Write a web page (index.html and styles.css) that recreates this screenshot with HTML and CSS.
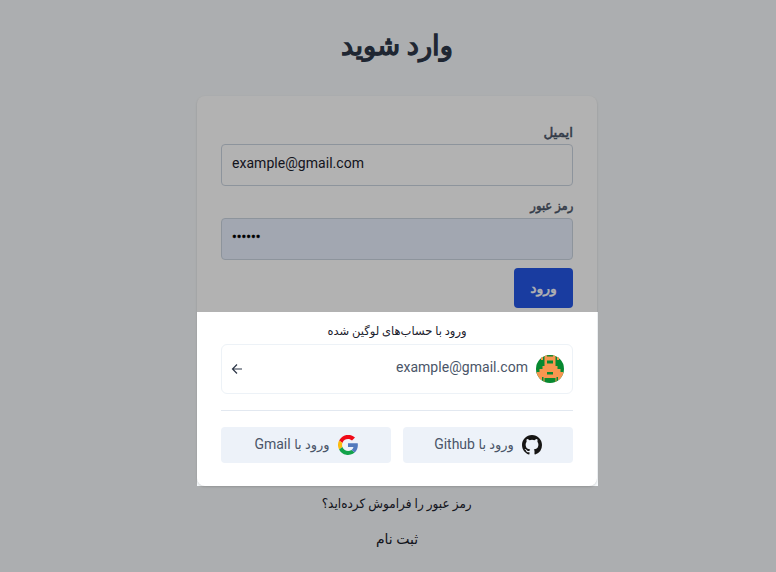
FILE: index.html
```html
<!DOCTYPE html>
<html lang="fa" dir="rtl">
<head>
<meta charset="utf-8">
<title>وارد شوید</title>
<link rel="stylesheet" href="styles.css">
</head>
<body>
<main class="page">
  <h1 class="title">وارد شوید</h1>
  <div class="card">
    <form class="form">
      <label class="label" for="email">ایمیل</label>
      <input class="input" id="email" type="text" dir="ltr" value="example@gmail.com">
      <label class="label label-next" for="password">رمز عبور</label>
      <div class="input input-filled" id="password" dir="ltr"><span class="dots">••••••</span></div>
      <button class="submit" type="button"><span>ورود</span></button>
    </form>
    <section class="spotlight">
      <div class="accounts-title">ورود با حساب‌های لوگین شده</div>
      <div class="account">
        <svg class="avatar" viewBox="0 0 28 28">
          <defs><clipPath id="round"><circle cx="14" cy="14" r="14"/></clipPath></defs>
          <g clip-path="url(#round)">
            <path fill="#078930" d="M0 0h28v28H0z"/>
            <path fill="#f79650" d="M8.500 0h11v11h2v3h3v3h3v5h-7v6h-1v-5h-11v5h-1v-6h-7v-5h3v-3h3v-3h2z"/>
            <path fill="#f79650" d="M5 2h2v3H5zM21 2h2v3h-2zM3 22h3v3H3zM22 22h3v3h-3z"/>
            <path fill="#078930" d="M11 0h6v1.500h-6zM11 5.500h6v3h-6zM11 17h6v2.500h-6z"/>
          </g>
        </svg>
        <span class="account-email">example@gmail.com</span>
        <svg class="arrow" viewBox="0 0 12 12"><path d="M11 6H1.500M6 1.500L1.500 6 6 10.500" fill="none" stroke="#2d3748" stroke-width="1.200"/></svg>
      </div>
      <div class="providers">
        <button class="provider" type="button">
          <svg class="logo" viewBox="0 0 16 16"><path fill="#161514" d="M8 0C3.580 0 0 3.580 0 8c0 3.540 2.290 6.530 5.470 7.590.4.070.55-.17.55-.38 0-.19-.01-.82-.01-1.490-2.010.37-2.530-.49-2.690-.94-.09-.23-.48-.94-.82-1.130-.28-.15-.68-.52-.01-.53.63-.01 1.080.58 1.230.82.72 1.210 1.870.87 2.330.66.07-.52.28-.87.51-1.070-1.780-.2-3.640-.89-3.640-3.950 0-.87.31-1.590.82-2.150-.08-.2-.36-1.020.08-2.120 0 0 .67-.21 2.200.82a7.600 7.600 0 0 1 4 0c1.530-1.040 2.200-.82 2.200-.82.44 1.100.16 1.920.08 2.120.51.56.82 1.270.82 2.150 0 3.070-1.870 3.750-3.650 3.950.29.25.54.73.54 1.480 0 1.070-.01 1.930-.01 2.200 0 .21.15.46.55.38A8.010 8.010 0 0 0 16 8c0-4.420-3.580-8-8-8z"/></svg>
          <span class="provider-text"><span class="fa">ورود با</span> Github</span>
        </button>
        <button class="provider" type="button">
          <svg class="logo" viewBox="0 0 20 20">
            <path fill="#f00a18" d="M10 4c1.600 0 3 .6 4 1.500L17 2.600A10 10 0 0 0 1.100 5.500l3.300 2.600A6 6 0 0 1 10 4z"/>
            <path fill="#fbbb10" d="M4.400 8.100L1.100 5.500a10 10 0 0 0 0 9l3.300-2.600a6 6 0 0 1 0-3.800z"/>
            <path fill="#12a34a" d="M4.400 11.900l-3.300 2.600a10 10 0 0 0 15.600 2.900l-3.200-2.500c-2.800 2-7.500 1.300-9.100-3z"/>
            <path fill="#537abd" d="M10 8.200V12h5.500c-.3 1.200-1 2.200-2 2.900l3.200 2.500c2.500-2.200 3.600-5.500 3-9.200z"/>
          </svg>
          <span class="provider-text"><span class="fa">ورود با</span> Gmail</span>
        </button>
      </div>
    </section>
  </div>
  <a class="link link-forgot">رمز عبور را فراموش کرده‌اید؟</a>
  <a class="link link-signup">ثبت نام</a>
</main>
</body>
</html>
```
FILE: styles.css
```css
* { box-sizing: border-box; }
body {
  margin: 0;
  height: 572px;
  overflow: hidden;
  background: #f7fafc;
  color: #1a202c;
  font-family: Roboto, "DejaVu Sans", sans-serif;
  font-size: 14px;
}
.page {
  display: flex;
  flex-direction: column;
  align-items: center;
  width: 400px;
  margin-right: 179px;
}
.title {
  margin: 0;
  height: 96px;
  padding-top: 25px;
  font-size: 27.300px;
  line-height: 42px;
  font-weight: 400;
  color: #2d3748;
  -webkit-text-stroke: 1.300px #2d3748;
  white-space: nowrap;
}
.card {
  width: 400px;
  height: 390px;
  background: #fff;
  border-radius: 8px;
  box-shadow: 0 1px 3px rgba(0, 0, 0, .1), 0 1px 2px rgba(0, 0, 0, .06);
}
.form {
  display: flex;
  flex-direction: column;
  align-items: flex-start;
  height: 216px;
  padding: 24px 24px 0;
}
.label {
  height: 24px;
  line-height: 24px;
  font-size: 13.500px;
  -webkit-text-stroke: .5px #4a5568;
  color: #4a5568;
}
.label-next {
  margin-top: 8px;
  font-size: 13px;
  transform: scaleX(.89);
  transform-origin: right;
}
.input {
  display: flex;
  width: 352px;
  height: 42px;
  padding: 0 10px 4px;
  border: 1px solid #cbd5e0;
  border-radius: 4px;
  background: #fff;
  color: #1a202c;
  font: 14px Roboto, sans-serif;
  letter-spacing: .04px;
}
.input-filled { background: #e8f0fe; align-items: center; color: #000; }
.dots { font-size: 14px; -webkit-text-stroke: .4px #000; }
.submit {
  width: 59px;
  height: 40px;
  margin-top: 8px;
  padding: 0;
  border: 0;
  border-radius: 4px;
  background: #2457e6;
  color: #fff;
  font: 14px/38px "DejaVu Sans", sans-serif;
  -webkit-text-stroke: .5px #fff;
}
/* The cut-out extends one pixel past the card on its right side. */
.spotlight {
  position: relative;
  z-index: 1;
  width: 401px;
  height: 174px;
  margin-right: -1px;
  padding: 8px 25px 0 24px;
  box-shadow: 0 0 0 1000px rgba(0, 0, 0, .3);
}
.accounts-title {
  height: 24px;
  font-size: 11.500px;
  line-height: 23px;
  text-align: center;
  color: #1a202c;
  white-space: nowrap;
}
.account {
  display: flex;
  align-items: center;
  height: 50px;
  padding: 0 8px 0 9px;
  border: 1px solid #edf2f7;
  border-radius: 6px;
}
.avatar { width: 28px; height: 28px; }
.account-email {
  margin-right: 8px;
  padding-bottom: 4px;
  color: #4a5568;
  direction: ltr;
  letter-spacing: .04px;
}
.arrow { width: 12px; height: 12px; margin-right: auto; }
.providers {
  display: flex;
  gap: 12px;
  margin-top: 16px;
  padding-top: 16px;
  border-top: 1px solid #e2e8f0;
}
.provider {
  display: flex;
  align-items: center;
  justify-content: center;
  gap: 8px;
  width: 170px;
  height: 36px;
  padding: 0;
  border: 0;
  border-radius: 4px;
  background: #edf2f9;
  color: #4a5568;
  font: 14px Roboto, "DejaVu Sans", sans-serif;
}
.logo { width: 20px; height: 20px; }
.provider-text { height: 22px; line-height: 20px; white-space: nowrap; }
.fa { font-size: 13px; }
.link { height: 36px; line-height: 36px; font-size: 13px; white-space: nowrap; }
.link-forgot { transform: scaleX(.93); }
.link-signup { font-size: 14px; line-height: 34px; }
```
